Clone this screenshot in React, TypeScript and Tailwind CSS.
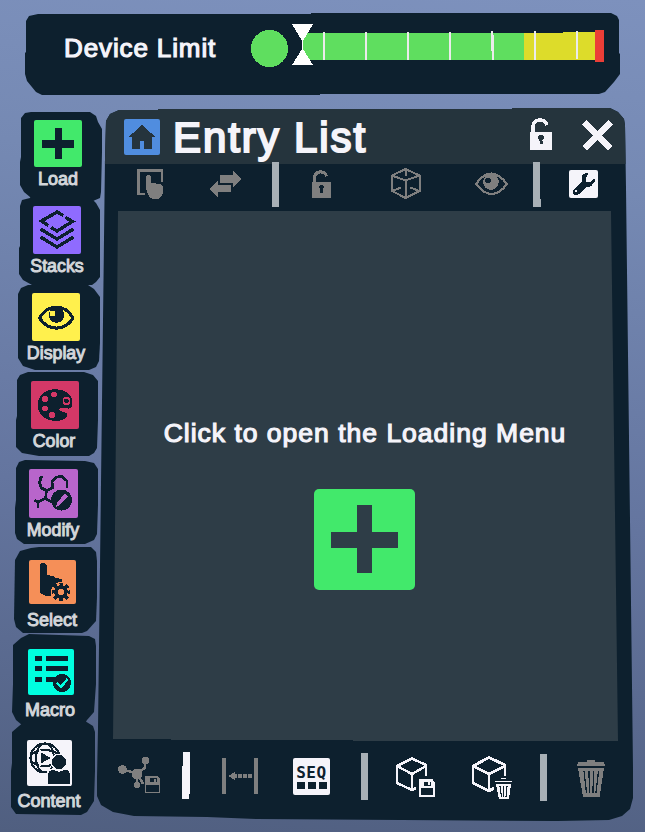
import React from "react";

type ArtProps = { box: string; className: string; children: React.ReactNode };

const Art = ({ box, className, children }: ArtProps) => (
  <svg viewBox={box} className={"block shrink-0 " + className} shapeRendering="crispEdges" fill="none">
    {children}
  </svg>
);

const INK = "#0d202e";
const GREY = "#7f7f7f";
const WHITE = "#f5f4fa";

const entries = [
  {
    label: "Load",
    frame:
      "ml-[20px] h-[89px] w-[82px] pt-[8px] [clip-path:polygon(1px_6px,5px_1px,11px_0,70px_0,76px_4px,78px_10px,82px_17px,82px_40px,81px_80px,80px_86px,73px_89px,11px_89px,10px_85px,4px_80px,0_73px,0_50px,1px_45px)]",
    tile: "ml-[14px] h-[47px] w-[48px] bg-[#42e96b]",
    text: "ml-[-7px] w-[90px] text-[18px]",
    gap: "mt-0",
    size: "0 0 48 47",
    art: <path d="M21 8h7v12h12v8H28v11h-7V28H8v-8h13z" fill={INK} />,
  },
  {
    label: "Stacks",
    frame:
      "mt-[-3px] ml-[19px] h-[87px] w-[81px] pt-[8px] [clip-path:polygon(1px_8px,3px_2px,11px_0,72px_0,77px_5px,81px_12px,81px_79px,77px_84px,73px_87px,13px_87px,4px_82px,0_76px,0_50px,1px_48px)]",
    tile: "ml-[14px] h-[48px] w-[48px] bg-[#8f6bff]",
    text: "ml-[-7px] w-[90px] text-[17.8px]",
    gap: "mt-0",
    size: "0 0 48 48",
    art: (
      <g stroke={INK} strokeWidth="3.300">
        <path d="M30.500 9.500 24 6 8.500 15l7 4.500M18 21.500l6 3.500 15.500-9.500-7-4" />
        <path d="M7.500 23 24 33l16.500-10M7.500 31 24 41l16.500-10" />
      </g>
    ),
  },
  {
    label: "Display",
    frame:
      "ml-[18px] h-[85px] w-[82px] pt-[8px] [clip-path:polygon(0_9px,3px_3px,10px_0,70px_0,76px_4px,82px_12px,82px_58px,81px_76px,78px_82px,71px_85px,17px_85px,5px_81px,0_73px)]",
    tile: "ml-[14px] h-[48px] w-[48px] bg-[#fff04d]",
    text: "ml-[-7px] w-[90px] text-[17.8px]",
    gap: "mt-0",
    size: "0 0 48 48",
    art: (
      <>
        <path d="M7.500 25C16 10.500 33 10.500 41 25 33 38.500 16 38.500 7.500 25z" stroke={INK} strokeWidth="3.100" />
        <circle cx="24.500" cy="22" r="7.800" fill={INK} />
        <circle cx="20.500" cy="20.500" r="2.800" fill="#fff04d" />
      </>
    ),
  },
  {
    label: "Color",
    frame:
      "mt-[2px] ml-[16px] h-[84px] w-[82px] pt-[9px] [clip-path:polygon(1px_8px,4px_3px,12px_0,68px_0,77px_3px,82px_9px,82px_48px,81px_76px,78px_81px,73px_84px,23px_84px,6px_81px,0_75px,0_48px,1px_44px)]",
    tile: "ml-[15px] h-[48px] w-[48px] bg-[#d33867]",
    text: "ml-[-7px] w-[90px] text-[17.8px]",
    gap: "mt-0",
    size: "0 0 48 48",
    art: (
      <>
        <path d="M24 8C35 8 41.500 15 41.500 21c0 5-2 7-5 6.500-4-1-8-1-8 1 0 3 8 2 8 5 0 4-6 6.500-12.500 6.500C14 40 6.500 33 6.500 24S14 8 24 8z" fill={INK} />
        <g fill="#d33867">
          <circle cx="23" cy="13.500" r="3" />
          <circle cx="14" cy="18" r="3" />
          <circle cx="14" cy="27.500" r="3" />
          <circle cx="21" cy="34" r="3" />
        </g>
        <circle cx="35.500" cy="20" r="3.200" stroke="#d33867" strokeWidth="1.500" />
      </>
    ),
  },
  {
    label: "Modify",
    frame:
      "mt-[4px] ml-[15px] h-[84px] w-[83px] pt-[9px] [clip-path:polygon(1px_8px,4px_2px,10px_0,70px_1px,79px_3px,83px_9px,83px_45px,82px_74px,79px_80px,70px_84px,9px_84px,2px_79px,0_73px,0_48px,1px_40px)]",
    tile: "ml-[14px] h-[49px] w-[49px] bg-[#b865cb]",
    text: "ml-[-7px] w-[90px] text-[17.8px]",
    gap: "mt-0",
    size: "0 0 49 49",
    art: (
      <>
        <path d="M14 8h-2l-1.500 6 2 5 5 2.500 6.500-3-1-5.500 3.500-4.500 6-1.500L38 12v7M17.500 21.500l-1 8L9 33l-3.500-1.500M9 33v5.500M16.500 29.500 23 33" stroke={INK} strokeWidth="2.700" />
        <circle cx="32.500" cy="31" r="10.500" fill={INK} />
        <path d="m27 38 1-4.500 8-9 3 3-8 8.500z" fill="#b865cb" />
      </>
    ),
  },
  {
    label: "Select",
    frame:
      "mt-[3px] ml-[14px] h-[86px] w-[83px] pt-[13px] [clip-path:polygon(1px_13px,6px_4px,17px_1px,25px_0,77px_0,82px_5px,83px_14px,83px_50px,82px_74px,73px_84px,68px_86px,9px_86px,2px_80px,0_72px)]",
    tile: "ml-[15px] h-[44px] w-[47px] bg-[#f58f58]",
    text: "ml-[-7px] w-[90px] text-[18px]",
    gap: "mt-[4px]",
    size: "0 0 47 44",
    art: (
      <>
        <path d="M11 6q0-3 3-3t4 3v9l6 1 2 2 7 1v3l-6 3-4 5-1 6-6-.500-5-2.500z" fill={INK} />
        <circle cx="32" cy="32" r="10" fill="#f58f58" />
        <circle cx="32" cy="32" r="5" stroke={INK} strokeWidth="3.600" />
        <circle cx="32" cy="32" r="8" stroke={INK} strokeWidth="3" strokeDasharray="3.500 2.783" strokeDashoffset="1.750" />
      </>
    ),
  },
  {
    label: "Macro",
    frame:
      "mt-[1px] ml-[12px] h-[91px] w-[84px] pt-[15px] [clip-path:polygon(1px_11px,9px_4px,17px_0,77px_2px,83px_5px,84px_12px,84px_50px,82px_78px,75px_86px,72px_91px,10px_91px,4px_86px,0_78px,1px_50px)]",
    tile: "ml-[16px] h-[46px] w-[46px] bg-[#00ffe0]",
    text: "ml-[-7px] w-[90px] text-[18px]",
    gap: "mt-[3px]",
    size: "0 0 46 46",
    art: (
      <>
        <path d="M7 7h7v5H7zM18 7h22v5H18zM7 17h7v5H7zM18 17h22v5H18zM7 28h7v5H7zM18 28h12v5H18z" fill={INK} />
        <circle cx="34" cy="34" r="9" fill={INK} />
        <path d="m29 34 4 4 6.500-8" stroke="#00ffe0" strokeWidth="2.400" />
      </>
    ),
  },
  {
    label: "Content",
    frame:
      "mt-[-4px] ml-[11px] h-[94px] w-[84px] pt-[19px] [clip-path:polygon(1px_11px,8px_5px,14px_0,74px_0,82px_5px,84px_11px,84px_50px,83px_80px,76px_91px,70px_94px,5px_93px,0_86px,0_50px,1px_42px)]",
    tile: "ml-[16px] h-[46px] w-[45px] bg-[#f5f4fa]",
    text: "ml-[-7px] w-[90px] text-[18px]",
    gap: "mt-[3px]",
    size: "0 0 45 46",
    art: (
      <>
        <g stroke={INK} strokeWidth="2.100">
          <circle cx="18" cy="18" r="14.500" />
          <ellipse cx="18" cy="18" rx="9" ry="14.500" />
          <ellipse cx="18" cy="18" rx="14.500" ry="8" />
        </g>
        <path d="m13 11 12 7-12 7z" fill={INK} stroke={WHITE} strokeWidth="1.500" />
        <g fill={INK} stroke={WHITE} strokeWidth="1.500">
          <path d="M20.500 45V35q0-6 6-6l5.500 2 6-2q5.500 0 5.500 6v10z" />
          <circle cx="32" cy="22" r="7.800" />
        </g>
      </>
    ),
  },
];

const Gauge = () => (
  <Art box="250 22 356 46" className="ml-[33px] mt-[9px] h-[46px] w-[356px]">
    <circle cx="269.500" cy="48.500" r="18.500" fill="#5fde5f" />
    <path d="M307 33h217v27H309l-7-11v-8z" fill="#5fde5f" />
    <path d="M524 33h39v-1h33v28h-72z" fill="#dddc2a" />
    <path d="M595 30h9v32h-9z" fill="#eb3e37" />
    <path d="M292 24h21l-10 17v8L313 65h-21l10-16v-8z" fill="#fff" />
    <path d="M323 32h2v28h-2zM365 32h2v28h-2zM407 32h2v28h-2zM449 32h2v28h-2zM491 31h2v20h-2zM492 35h2v25h-2zM534 31h2v29h-2zM576 31h2v28h-2z" fill="#ebebeb" />
  </Art>
);

const Padlock = ({ hole }: { hole: string }) => (
  <>
    <path d="M3 13V7q1-6 7-6 5 0 7 5" stroke="currentColor" strokeWidth="3.600" />
    <path d="M0 12.500h22V31H0z" fill="currentColor" />
    <path d="M8 19q0-3 3-3t3 3l-1.500 2.500V25h-3v-3.500z" fill={hole} />
  </>
);

const Disk = () => (
  <>
    <path d="M1 1h12l2 3v13H1z" stroke="currentColor" strokeWidth="1.500" fill={INK} />
    <path d="M1 1h12l2 3v5H1z" fill="currentColor" />
    <path d="M5 2.500h7v4H5z" fill={INK} />
    <path d="M9 3h2v3H9z" fill="currentColor" />
  </>
);

const Bin = () => (
  <>
    <path d="M10 0h8v2h9l1 4H0l1-4h9zM1 8h26l-4.500 29H6z" fill="currentColor" />
    <path d="M7 11l2.500 22M12 11l.500 22M16.500 11l-.500 22M21.500 11 19 33" stroke={INK} strokeWidth="1.300" />
  </>
);

const SmallBin = () => (
  <>
    <path d="M6 .500h5M0 3.500h17" stroke={WHITE} strokeWidth="1.500" />
    <path d="M1 6h15l-2 15H4z" fill={WHITE} />
    <path d="M5 8l1.500 11M8.500 8v11M12 8l-1 11" stroke={INK} strokeWidth="1.200" />
  </>
);

const Toolbar = () => (
  <div className="flex h-[47px] items-start">
    <Art box="137 169 26 30" className="ml-[40px] mt-[5px] h-[30px] w-[26px]">
      <path d="M145 194h-6.500v-23.500H162v11" stroke={GREY} strokeWidth="2.500" />
      <path d="M146 177q0-2 2.500-2t2.500 2v6l9 1q3 1 3 4v4q-1 7-7 7-6 0-7-3l-3-7z" fill={GREY} />
    </Art>
    <Art box="209 171 32 27" className="ml-[46px] mt-[7px] h-[27px] w-[32px]">
      <path d="M220 175h13v-4l8 8-8 8v-4h-13zM231 185h-13v-5l-9 9 9 8.500V192h13z" fill={GREY} />
    </Art>
    <div className="ml-[31px] mt-[-2px] h-[45px] w-[7px] bg-[#a8b0b6]" />
    <Art box="0 -1 22 32" className="ml-[33px] mt-[6px] h-[28px] w-[19px] text-[#7f7f7f]"><Padlock hole={INK} /></Art>
    <Art box="390 168 31 31" className="ml-[59px] mt-[4px] h-[31px] w-[31px]">
      <path d="m405.500 169 14 6.500V191l-14 7L392 191v-15.500zM392 175.500l13.500 5 14-5M405.500 169v7M405.500 180v18M392 191l9-3.500M419.500 191l-9-3.500" stroke={GREY} strokeWidth="2" />
    </Art>
    <Art box="474 171 34 25" className="ml-[53px] mt-[7px] h-[25px] w-[34px]">
      <path d="M476 184q15-21 31 0-15 20-31 0z" stroke={GREY} strokeWidth="2.200" />
      <circle cx="491" cy="182" r="7.800" fill={GREY} />
      <circle cx="488" cy="180.500" r="2.700" fill={INK} />
    </Art>
    <div className="ml-[25px] mt-[-2px] h-[45px] w-[8px] bg-[#a8b0b6] [clip-path:polygon(0_0,7px_0,7px_37px,8px_37px,8px_45px,0_45px)]" />
    <div className="ml-[28px] mt-[6px] h-[28px] w-[29px] rounded-[2px] bg-[#f5f4fa]">
      <Art box="569 170 29 28" className="h-[28px] w-[29px]">
        <path d="m582 175 4-2h2v1.500l-2.500 3.500 1 4 4 .500 3-4h1v3l-3 4.500-5.500 1.500-7.500 7q-3 1.500-5-.500-1.500-2.500 1-5l8-7.500z" fill={INK} />
        <circle cx="576" cy="191" r="1.500" fill={WHITE} />
      </Art>
    </div>
  </div>
);

const BottomBar = () => (
  <div className="flex h-[72px] items-start">
    <Art box="118 756 43 38" className="ml-[21px] mt-[15px] h-[38px] w-[43px]">
      <path d="m123 770 14 3 8-5v-7M137 773v13M137 773l6 11" stroke={GREY} strokeWidth="2.500" />
      <g fill={GREY}>
        <circle cx="122.500" cy="769.500" r="4.500" />
        <circle cx="137" cy="774" r="5.500" />
        <circle cx="145.500" cy="760.500" r="3.800" />
        <circle cx="137" cy="785" r="3" />
      </g>
      <g transform="translate(144.500 775.500)" color={GREY}><Disk /></g>
    </Art>
    <div className="ml-[21px] mt-[11px] h-[47px] w-[8px] bg-[#f5f4fa] [clip-path:polygon(1px_0,8px_0,8px_42px,7px_42px,7px_47px,0_47px,0_14px,1px_14px)]" />
    <Art box="222 758 36 36" className="ml-[32px] mt-[17px] h-[36px] w-[36px]">
      <path d="M222 758h4v36h-4zM254 758h4v36h-4zM228 776l7-4v8zM234 774h3v4h-3zM238 774h4v4h-4zM243 774h4v4h-4zM248 774h4v4h-4z" fill={GREY} />
    </Art>
    <div className="ml-[35px] mt-[17px] flex h-[37px] w-[37px] flex-col items-center rounded-[2px] bg-[#f5f4fa] pt-[7px] font-['DejaVu_Sans_Mono','Liberation_Mono',monospace] text-[#0d202e]">
      <span className="h-[16px] text-[16px] font-bold leading-[16px] tracking-[0.6px]">SEQ</span>
      <div className="mt-px flex gap-[3px]">
        <i className="h-[7px] w-[8px] bg-[#0d202e]" />
        <i className="h-[7px] w-[8px] bg-[#0d202e]" />
        <i className="h-[7px] w-[8px] bg-[#0d202e]" />
      </div>
    </div>
    <div className="ml-[31px] mt-[12px] h-[47px] w-[7px] bg-[#a8b0b6]" />
    <Art box="396 757 40 41" className="ml-[28px] mt-[16px] h-[41px] w-[40px]">
      <path d="M426 776v-11l-14-6.500-15 7.500v17l15 7 4-2M397 766l15 8 14-8M412 774v16" stroke={WHITE} strokeWidth="2.500" />
      <g transform="translate(419 779)" color={WHITE}><Disk /></g>
    </Art>
    <Art box="472 756 41 43" className="ml-[36px] mt-[15px] h-[43px] w-[41px]">
      <path d="M505 776v-11l-16-7.500-16 8.500v17l16 8 5-3M473 766l16 8 16-8M489 774v17" stroke={WHITE} strokeWidth="2.800" />
      <g transform="translate(495 778)"><SmallBin /></g>
    </Art>
    <div className="ml-[27px] mt-[13px] h-[47px] w-[7px] bg-[#a8b0b6]" />
    <Art box="0 0 28 37" className="ml-[30px] mt-[19px] h-[37px] w-[28px] text-[#7f7f7f]"><Bin /></Art>
  </div>
);

export default function App() {
  return (
    <div className="flex h-[832px] w-[645px] flex-col overflow-hidden bg-[linear-gradient(185deg,#7d91bd_0%,#7589b3_22%,#64759f_60%,#505f80_100%)] font-['Liberation_Sans',Arial,sans-serif] text-[#f5f4fa]">
      <header className="ml-[25px] mt-[13px] flex h-[82px] w-[595px] items-start bg-[#0d202e] [clip-path:polygon(1px_8px,4px_3px,13px_1px,286px_1px,286px_0,586px_0,592px_3px,594px_7px,594px_40px,595px_41px,595px_61px,589px_69px,580px_79px,574px_81px,295px_81px,295px_82px,17px_82px,11px_79px,2px_68px,0_61px,0_40px,1px_39px)]">
        <h2 className="ml-[39px] mt-[20px] w-[153px] whitespace-nowrap text-[26px] leading-[30px] tracking-[0.88px] [-webkit-text-stroke:1.2px_#f5f4fa]">Device Limit</h2>
        <Gauge />
      </header>

      <div className="mt-[13px] flex">
        <nav className="mt-[4px] flex w-[97px] shrink-0 flex-col">
          {entries.map((e) => (
            <div key={e.label} className={"shrink-0 bg-[#0d202e] " + e.frame}>
              <div className={"rounded-[2px] " + e.tile}>
                <Art box={e.size} className="h-full w-full">{e.art}</Art>
              </div>
              <div className={"whitespace-nowrap text-center leading-[24px] text-[#d3d6da] [-webkit-text-stroke:1px_#d3d6da] " + e.gap + " " + e.text}>{e.label}</div>
            </div>
          ))}
        </nav>

        <main className="flex h-[713px] w-[536px] shrink-0 flex-col bg-[#0d202e] [clip-path:polygon(9px_13px,13px_6px,22px_2px,61px_2px,61px_1px,415px_1px,415px_0,513px_0,521px_4px,527px_11px,528px_17px,529px_80px,536px_660px,536px_690px,533px_701px,525px_708px,512px_712px,460px_713px,160px_711px,110px_709px,37px_708px,16px_704px,4px_697px,0_688px,0_670px,1px_620px,8px_50px)]">
          <div className="flex h-[56px] items-start bg-[#25343d]">
            <div className="ml-[27px] mt-[11px] h-[36px] w-[36px] rounded-[2px] bg-[#508ddf]">
              <Art box="0 0 36 36" className="h-[36px] w-[36px]">
                <path d="M4.500 18 18 6l13.500 12H28v12h-8v-8h-4v8H8V18z" fill="#25343d" />
              </Art>
            </div>
            <h1 className="ml-[13px] mt-[6px] w-[200px] whitespace-nowrap text-[42px] leading-[48px] tracking-[1.9px] [-webkit-text-stroke:2.100px_#f5f4fa]">Entry List</h1>
            <Art box="0 -1 22 32" className="ml-[157px] mt-[10px] h-[32px] w-[22px] text-[#f5f4fa]"><Padlock hole="#25343d" /></Art>
            <Art box="0 0 31 31" className="ml-[30px] mt-[12px] h-[31px] w-[31px]">
              <path d="m2.500 2.500 26 26M28.500 2.500l-26 26" stroke={WHITE} strokeWidth="6" />
            </Art>
          </div>
          <Toolbar />
          <section className="ml-[16px] flex h-[530px] w-[505px] shrink-0 flex-col items-center bg-[#2e3d47] pr-[3px] [clip-path:polygon(5px_0,498px_0,505px_530px,240px_530px,240px_529px,58px_529px,58px_528px,0_528px)]">
            <p className="mt-[206px] whitespace-nowrap pl-[2px] text-[26.5px] leading-[32px] tracking-[1px] [-webkit-text-stroke:1.2px_#f5f4fa]">Click to open the Loading Menu</p>
            <button className="mt-[40px] h-[101px] w-[101px] rounded-[5px] bg-[#42e96b]">
              <Art box="0 0 101 101" className="h-[101px] w-[101px]">
                <path d="M43 16h15v27h26v16H58v25H43V59H17V43h26z" fill="#2e3d47" />
              </Art>
            </button>
          </section>
          <BottomBar />
        </main>
      </div>
    </div>
  );
}
